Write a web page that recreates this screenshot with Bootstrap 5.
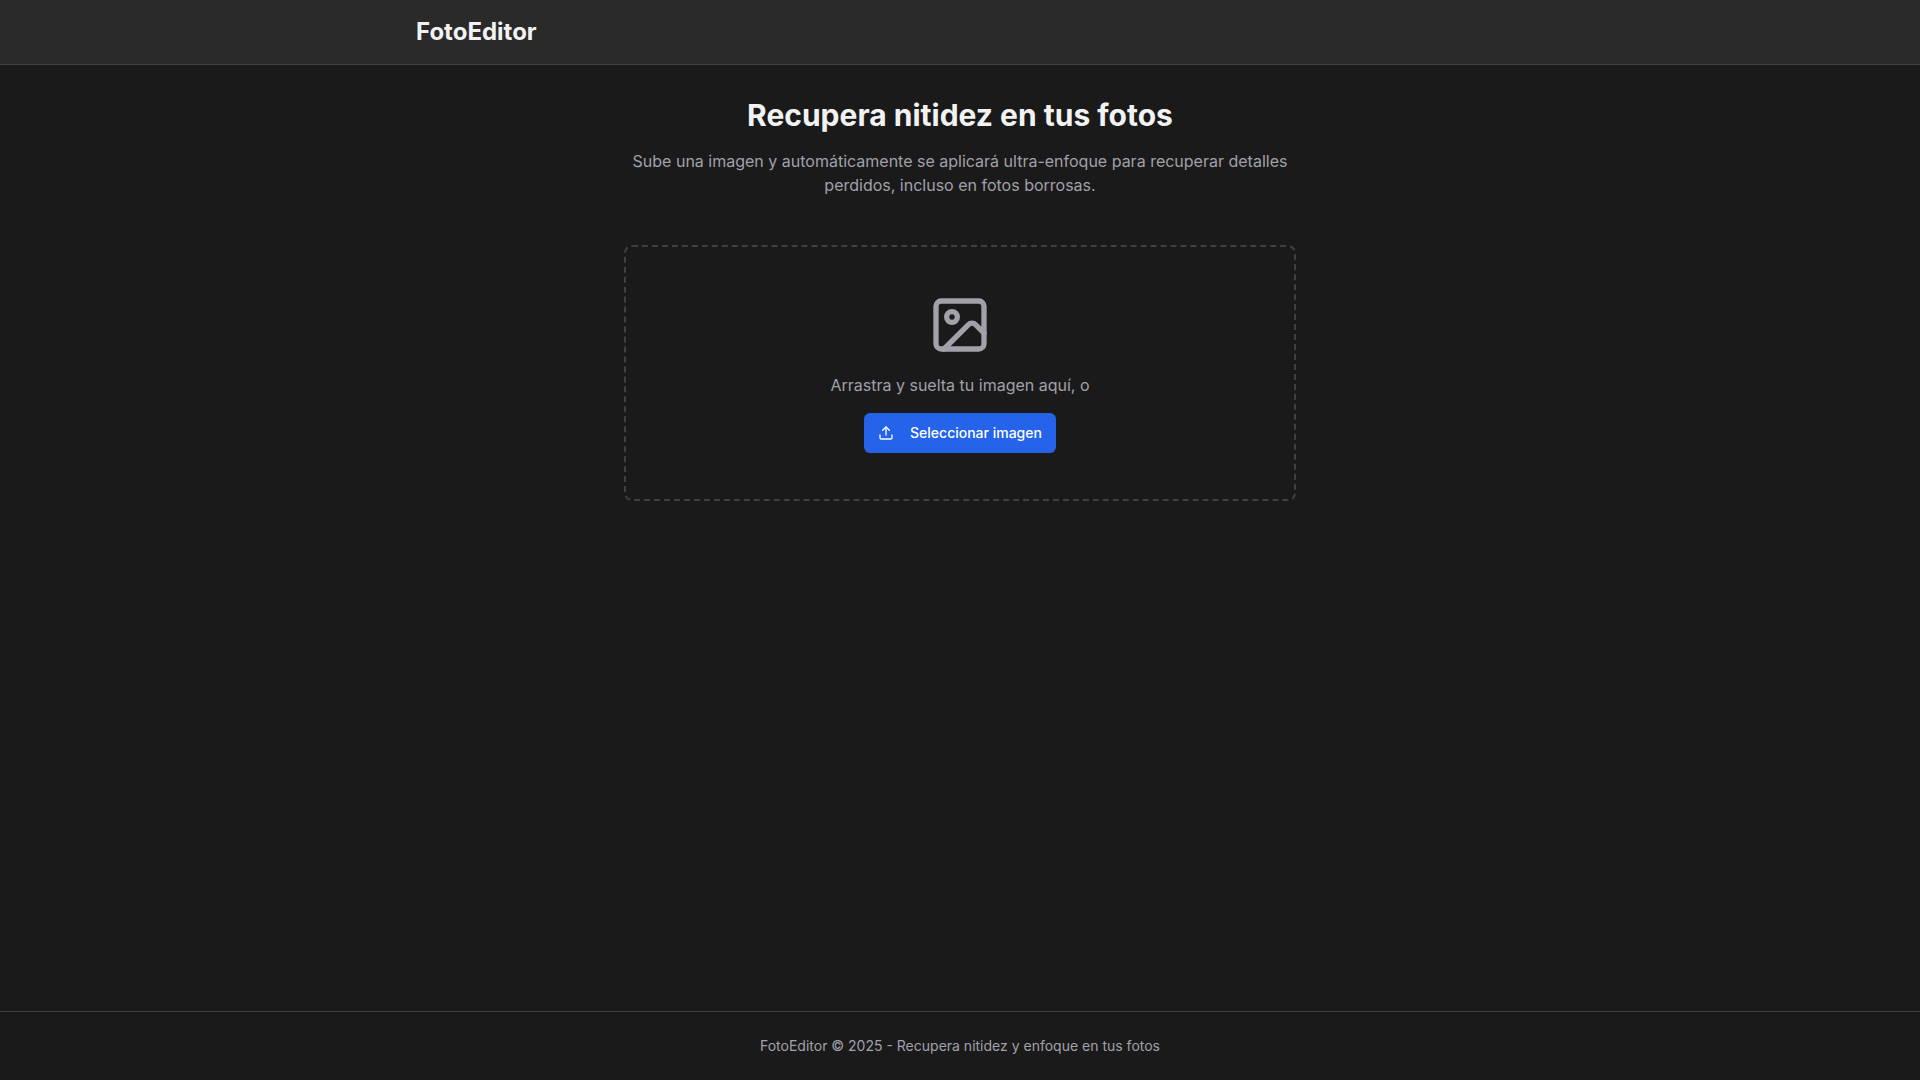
<!DOCTYPE html>
<html lang="es">
<head>
<meta charset="utf-8">
<meta name="viewport" content="width=device-width, initial-scale=1">
<title>FotoEditor</title>
<link href="https://cdn.jsdelivr.net/npm/bootstrap@5.3.0/dist/css/bootstrap.min.css" rel="stylesheet">
<style>
body { background: #1a1a1a; color: #f2f2f2; font-family: Inter, sans-serif; font-size: 16px; line-height: 24px; }
.site-header { background: #2a2a2a; border-bottom: 1px solid #3f3f46; }
.site-wrap { max-width: 1120px; }
.brand-link { color: #f2f2f2; font-size: 24px; line-height: 32px; }
.intro-wrap, .drop-zone { max-width: 672px; }
.intro-title { font-size: 30px; line-height: 36px; }
.soft-text { color: #a1a1aa; }
.drop-zone { border: 2px dashed #3f3f46; border-radius: 8px; padding: 46px; }
.pick-btn { --bs-btn-bg: #2563eb; --bs-btn-color: #fff; --bs-btn-hover-bg: #1d4ed8; --bs-btn-hover-color: #fff; height: 40px; padding: 8px 14px; font-size: 14px; line-height: 20px; border-radius: 6px; }
.site-footer { border-top: 1px solid #3f3f46; font-size: 14px; line-height: 20px; }
</style>
</head>
<body class="d-flex flex-column min-vh-100">
<header class="site-header py-3">
  <div class="site-wrap mx-auto px-3">
    <a class="brand-link d-inline-block align-top fw-bold text-decoration-none" href="#">FotoEditor</a>
  </div>
</header>
<main class="flex-grow-1 px-3 pt-4 pb-4">
  <section class="intro-wrap mx-auto text-center mt-2 mb-5">
    <h1 class="intro-title fw-bold mb-3">Recupera nitidez en tus fotos</h1>
    <p class="soft-text mb-0">Sube una imagen y automáticamente se aplicará ultra-enfoque para recuperar detalles perdidos, incluso en fotos borrosas.</p>
  </section>
  <section class="drop-zone mx-auto d-flex flex-column align-items-center text-center">
    <svg class="soft-text mb-3" width="64" height="64" viewBox="0 0 24 24" fill="none" stroke="currentColor" stroke-width="2" stroke-linecap="round" stroke-linejoin="round" aria-hidden="true"><rect width="18" height="18" x="3" y="3" rx="2"/><circle cx="9" cy="9" r="2"/><path d="m21 15-3.086-3.086a2 2 0 0 0-2.828 0L6 21"/></svg>
    <p class="soft-text mb-3">Arrastra y suelta tu imagen aquí, o</p>
    <button type="button" class="pick-btn btn border-0 d-inline-flex align-items-center gap-3 fw-medium">
      <svg width="16" height="16" viewBox="0 0 24 24" fill="none" stroke="currentColor" stroke-width="2" stroke-linecap="round" stroke-linejoin="round" aria-hidden="true"><path d="M21 15v4a2 2 0 0 1-2 2H5a2 2 0 0 1-2-2v-4"/><path d="m17 8-5-5-5 5"/><path d="M12 3v12"/></svg>
      Seleccionar imagen
    </button>
  </section>
</main>
<footer class="site-footer soft-text text-center py-4 px-3">
  <p class="mb-0">FotoEditor © 2025 - Recupera nitidez y enfoque en tus fotos</p>
</footer>
<script src="https://cdn.jsdelivr.net/npm/bootstrap@5.3.0/dist/js/bootstrap.bundle.min.js"></script>
</body>
</html>
